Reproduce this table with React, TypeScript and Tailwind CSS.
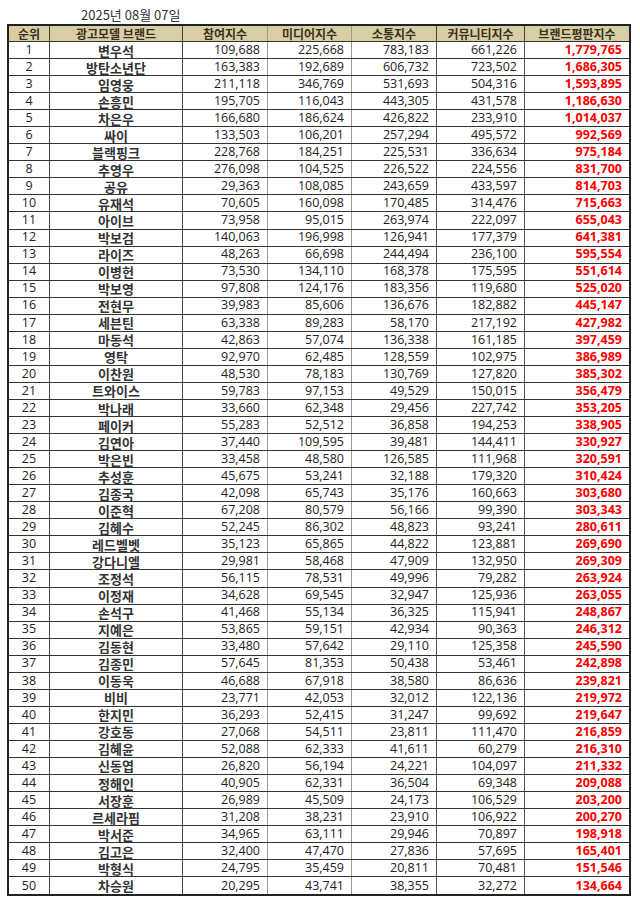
const rows: [string, number, number, number, number, number][] = [
  ["변우석", 109688, 225668, 783183, 661226, 1779765],
  ["방탄소년단", 163383, 192689, 606732, 723502, 1686305],
  ["임영웅", 211118, 346769, 531693, 504316, 1593895],
  ["손흥민", 195705, 116043, 443305, 431578, 1186630],
  ["차은우", 166680, 186624, 426822, 233910, 1014037],
  ["싸이", 133503, 106201, 257294, 495572, 992569],
  ["블랙핑크", 228768, 184251, 225531, 336634, 975184],
  ["추영우", 276098, 104525, 226522, 224556, 831700],
  ["공유", 29363, 108085, 243659, 433597, 814703],
  ["유재석", 70605, 160098, 170485, 314476, 715663],
  ["아이브", 73958, 95015, 263974, 222097, 655043],
  ["박보검", 140063, 196998, 126941, 177379, 641381],
  ["라이즈", 48263, 66698, 244494, 236100, 595554],
  ["이병헌", 73530, 134110, 168378, 175595, 551614],
  ["박보영", 97808, 124176, 183356, 119680, 525020],
  ["전현무", 39983, 85606, 136676, 182882, 445147],
  ["세븐틴", 63338, 89283, 58170, 217192, 427982],
  ["마동석", 42863, 57074, 136338, 161185, 397459],
  ["영탁", 92970, 62485, 128559, 102975, 386989],
  ["이찬원", 48530, 78183, 130769, 127820, 385302],
  ["트와이스", 59783, 97153, 49529, 150015, 356479],
  ["박나래", 33660, 62348, 29456, 227742, 353205],
  ["페이커", 55283, 52512, 36858, 194253, 338905],
  ["김연아", 37440, 109595, 39481, 144411, 330927],
  ["박은빈", 33458, 48580, 126585, 111968, 320591],
  ["추성훈", 45675, 53241, 32188, 179320, 310424],
  ["김종국", 42098, 65743, 35176, 160663, 303680],
  ["이준혁", 67208, 80579, 56166, 99390, 303343],
  ["김혜수", 52245, 86302, 48823, 93241, 280611],
  ["레드벨벳", 35123, 65865, 44822, 123881, 269690],
  ["강다니엘", 29981, 58468, 47909, 132950, 269309],
  ["조정석", 56115, 78531, 49996, 79282, 263924],
  ["이정재", 34628, 69545, 32947, 125936, 263055],
  ["손석구", 41468, 55134, 36325, 115941, 248867],
  ["지예은", 53865, 59151, 42934, 90363, 246312],
  ["김동현", 33480, 57642, 29110, 125358, 245590],
  ["김종민", 57645, 81353, 50438, 53461, 242898],
  ["이동욱", 46688, 67918, 38580, 86636, 239821],
  ["비비", 23771, 42053, 32012, 122136, 219972],
  ["한지민", 36293, 52415, 31247, 99692, 219647],
  ["강호동", 27068, 54511, 23811, 111470, 216859],
  ["김혜윤", 52088, 62333, 41611, 60279, 216310],
  ["신동엽", 26820, 56194, 24221, 104097, 211332],
  ["정해인", 40905, 62331, 36504, 69348, 209088],
  ["서장훈", 26989, 45509, 24173, 106529, 203200],
  ["르세라핌", 31208, 38231, 23910, 106922, 200270],
  ["박서준", 34965, 63111, 29946, 70897, 198918],
  ["김고은", 32400, 47470, 27836, 57695, 165401],
  ["박형식", 24795, 35459, 20811, 70481, 151546],
  ["차승원", 20295, 43741, 38355, 32272, 134664],
];

const grid = "grid grid-cols-[41px_133px_85px_84px_85px_88px_104px]";
const fmt = (n: number) => n.toLocaleString("en-US");

export default function App() {
  return (
    <div className="min-h-[905px] w-[640px] bg-white pl-[7px] pt-[7px] font-['Noto_Sans_CJK_KR',sans-serif] text-[#222]">
      <div className="ml-[74px] h-[17px] text-[13px] leading-[16px] text-[#333]">2025년 08월 07일</div>
      <div className="w-[624px] border-2 border-[#222]">
        <div className={`${grid} h-[16px] border-b border-[#333] bg-[#d8cea6] text-[12px] font-bold leading-none text-[#3b3020]`}>
          {["순위", "광고모델 브랜드", "참여지수", "미디어지수", "소통지수", "커뮤니티지수", "브랜드평판지수"].map((h, i) => (
            <div
              key={h}
              className={`flex items-center justify-center ${
                i === 6 ? "" : i === 2 || i === 3 ? "border-r border-[#999]" : "border-r border-[#444]"
              }`}
            >
              {h}
            </div>
          ))}
        </div>
        {rows.map(([name, a, b, c, d, total], idx) => (
          <div
            key={name}
            className={`${grid} h-[17.06px] ${idx === rows.length - 1 ? "" : "border-b border-[#333]"}`}
          >
            <div className="flex items-center justify-center border-r border-[#444] font-['Open_Sans',sans-serif] text-[12.5px] leading-none">
              {idx + 1}
            </div>
            <div className="flex items-center justify-center border-r border-[#444] text-[13px] font-bold leading-none text-[#333]">
              {name}
            </div>
            {[a, b, c, d].map((v, i) => (
              <div
                key={i}
                className={`flex items-center justify-end pr-[7px] font-['Open_Sans',sans-serif] text-[12.5px] leading-none ${
                  i < 2 ? "border-r border-[#999]" : "border-r border-[#555]"
                }`}
              >
                {fmt(v)}
              </div>
            ))}
            <div className="flex items-center justify-end pr-[7px] font-['Open_Sans',sans-serif] text-[12.5px] font-bold leading-none text-[#ff0000]">
              {fmt(total)}
            </div>
          </div>
        ))}
      </div>
    </div>
  );
}
